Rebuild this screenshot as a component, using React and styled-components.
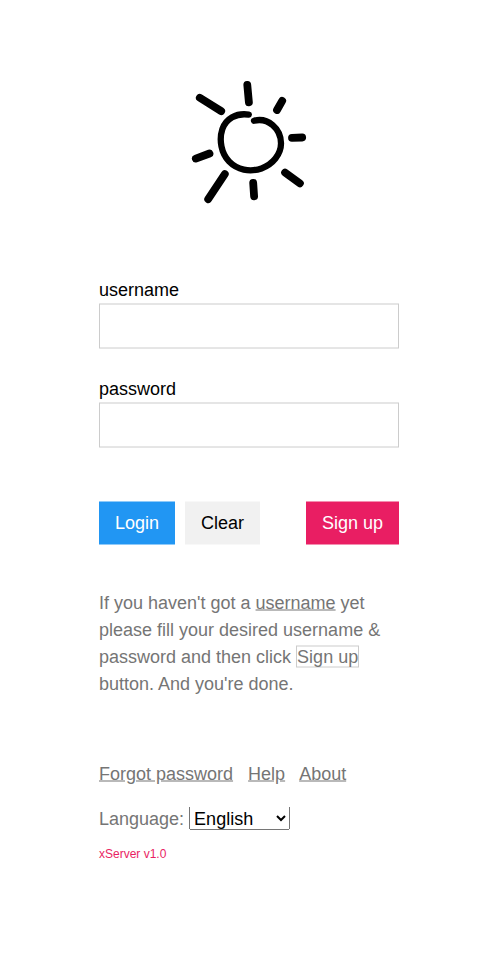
import React from "react";
import styled, { createGlobalStyle } from "styled-components";

const GlobalStyle = createGlobalStyle`
  *, *::before, *::after { box-sizing: border-box; }
  body {
    margin: 0;
    background: #fff;
    color: #000;
    font: 18px/1.5 "Liberation Sans", Arial, sans-serif;
  }
`;

const Page = styled.main`
  display: flex;
  justify-content: center;
  height: 980px;
  padding-top: 78px;
  overflow: hidden;
`;

const LoginPanel = styled.div`
  display: flex;
  flex-direction: column;
  width: 300px;
  transform: translateY(0.5px);
`;

const Logo = styled.svg`
  display: block;
  width: 140px;
  height: 130px;
  margin: 0 auto 68px;
  fill: none;
  stroke: #000;
  stroke-linecap: round;
  stroke-linejoin: round;
`;

const Field = styled.label`
  display: block;
  margin-bottom: 27px;
`;

const Input = styled.input`
  display: block;
  width: 100%;
  height: 45px;
  padding: 8px;
  border: 1px solid #ccc;
  border-radius: 0;
  outline: none;
  background: #fff;
  font: inherit;
`;

const Actions = styled.div`
  display: flex;
  gap: 10px;
  margin-top: 27px;
`;

const tones = {
  blue: ["#2196f3", "#fff"],
  grey: ["#f1f1f1", "#000"],
  pink: ["#e91e63", "#fff"],
};

const Button = styled.button`
  height: 43px;
  padding: 8px 16px;
  border: 0;
  margin-left: ${({ $end }) => ($end ? "auto" : "0")};
  background: ${({ $tone }) => tones[$tone][0]};
  color: ${({ $tone }) => tones[$tone][1]};
  font: inherit;
  white-space: nowrap;
  cursor: pointer;
`;

const Hint = styled.p`
  margin: 45px 0 63px;
  color: #757575;
`;

const Boxed = styled.span`
  border: 1px solid #ccc;
`;

const Links = styled.nav`
  color: #757575;
`;

const Link = styled.a`
  margin-right: 10px;
  color: inherit;
  text-decoration: underline;
`;

const LanguageRow = styled.div`
  height: 27px;
  margin-top: 18px;
  color: #757575;
`;

const Select = styled.select`
  width: 101px;
  height: 24px;
  margin-top: 1px;
  padding-top: 1px;
  vertical-align: top;
  font: inherit;
  transform: translateY(-0.5px);
  clip-path: inset(1px 0 0 0);
`;

const Version = styled.small`
  margin-top: 12px;
  color: #e91e63;
  font-size: 12px;
`;

export default function App() {
  return (
    <>
      <GlobalStyle />
      <Page>
        <LoginPanel>
          <Logo viewBox="179 78.5 140 130" aria-label="Sun">
            <path
              strokeWidth="6.3"
              d="M248.8 114.6C236 112.7 226 118.8 222.4 129C218.7 140 221.4 153.3 229 161.3C237.2 169.8 249.5 172.5 261.5 168.4C272.5 164.6 281.2 154.4 281 143.2C280.8 128.5 268 117.2 254 120.7"
            />
            <path
              strokeWidth="7.8"
              d="M247.3 85l1.6 17.3M282.2 100.8l-5.2 9.2M292 137.8l10.2-.3M285.1 172.6l14.8 10.7M253.2 183l.9 13.3M224.8 174.1l-16.6 25.1M209.5 153.5l-13.7 5.1M221.2 111.1l-21.4-13.3"
            />
          </Logo>
          <Field>
            username
            <Input type="text" />
          </Field>
          <Field>
            password
            <Input type="password" />
          </Field>
          <Actions>
            <Button $tone="blue">Login</Button>
            <Button $tone="grey">Clear</Button>
            <Button $tone="pink" $end>Sign up</Button>
          </Actions>
          <Hint>
            If you haven't got a <u>username</u> yet please fill your desired
            username &amp; password and then click <Boxed>Sign up</Boxed> button.
            And you're done.
          </Hint>
          <Links>
            <Link href="#">Forgot password</Link>{" "}
            <Link href="#">Help</Link>{" "}
            <Link href="#">About</Link>
          </Links>
          <LanguageRow>
            Language:{" "}
            <Select defaultValue="en" aria-label="Language">
              <option value="en">English</option>
            </Select>
          </LanguageRow>
          <Version>xServer v1.0</Version>
        </LoginPanel>
      </Page>
    </>
  );
}
